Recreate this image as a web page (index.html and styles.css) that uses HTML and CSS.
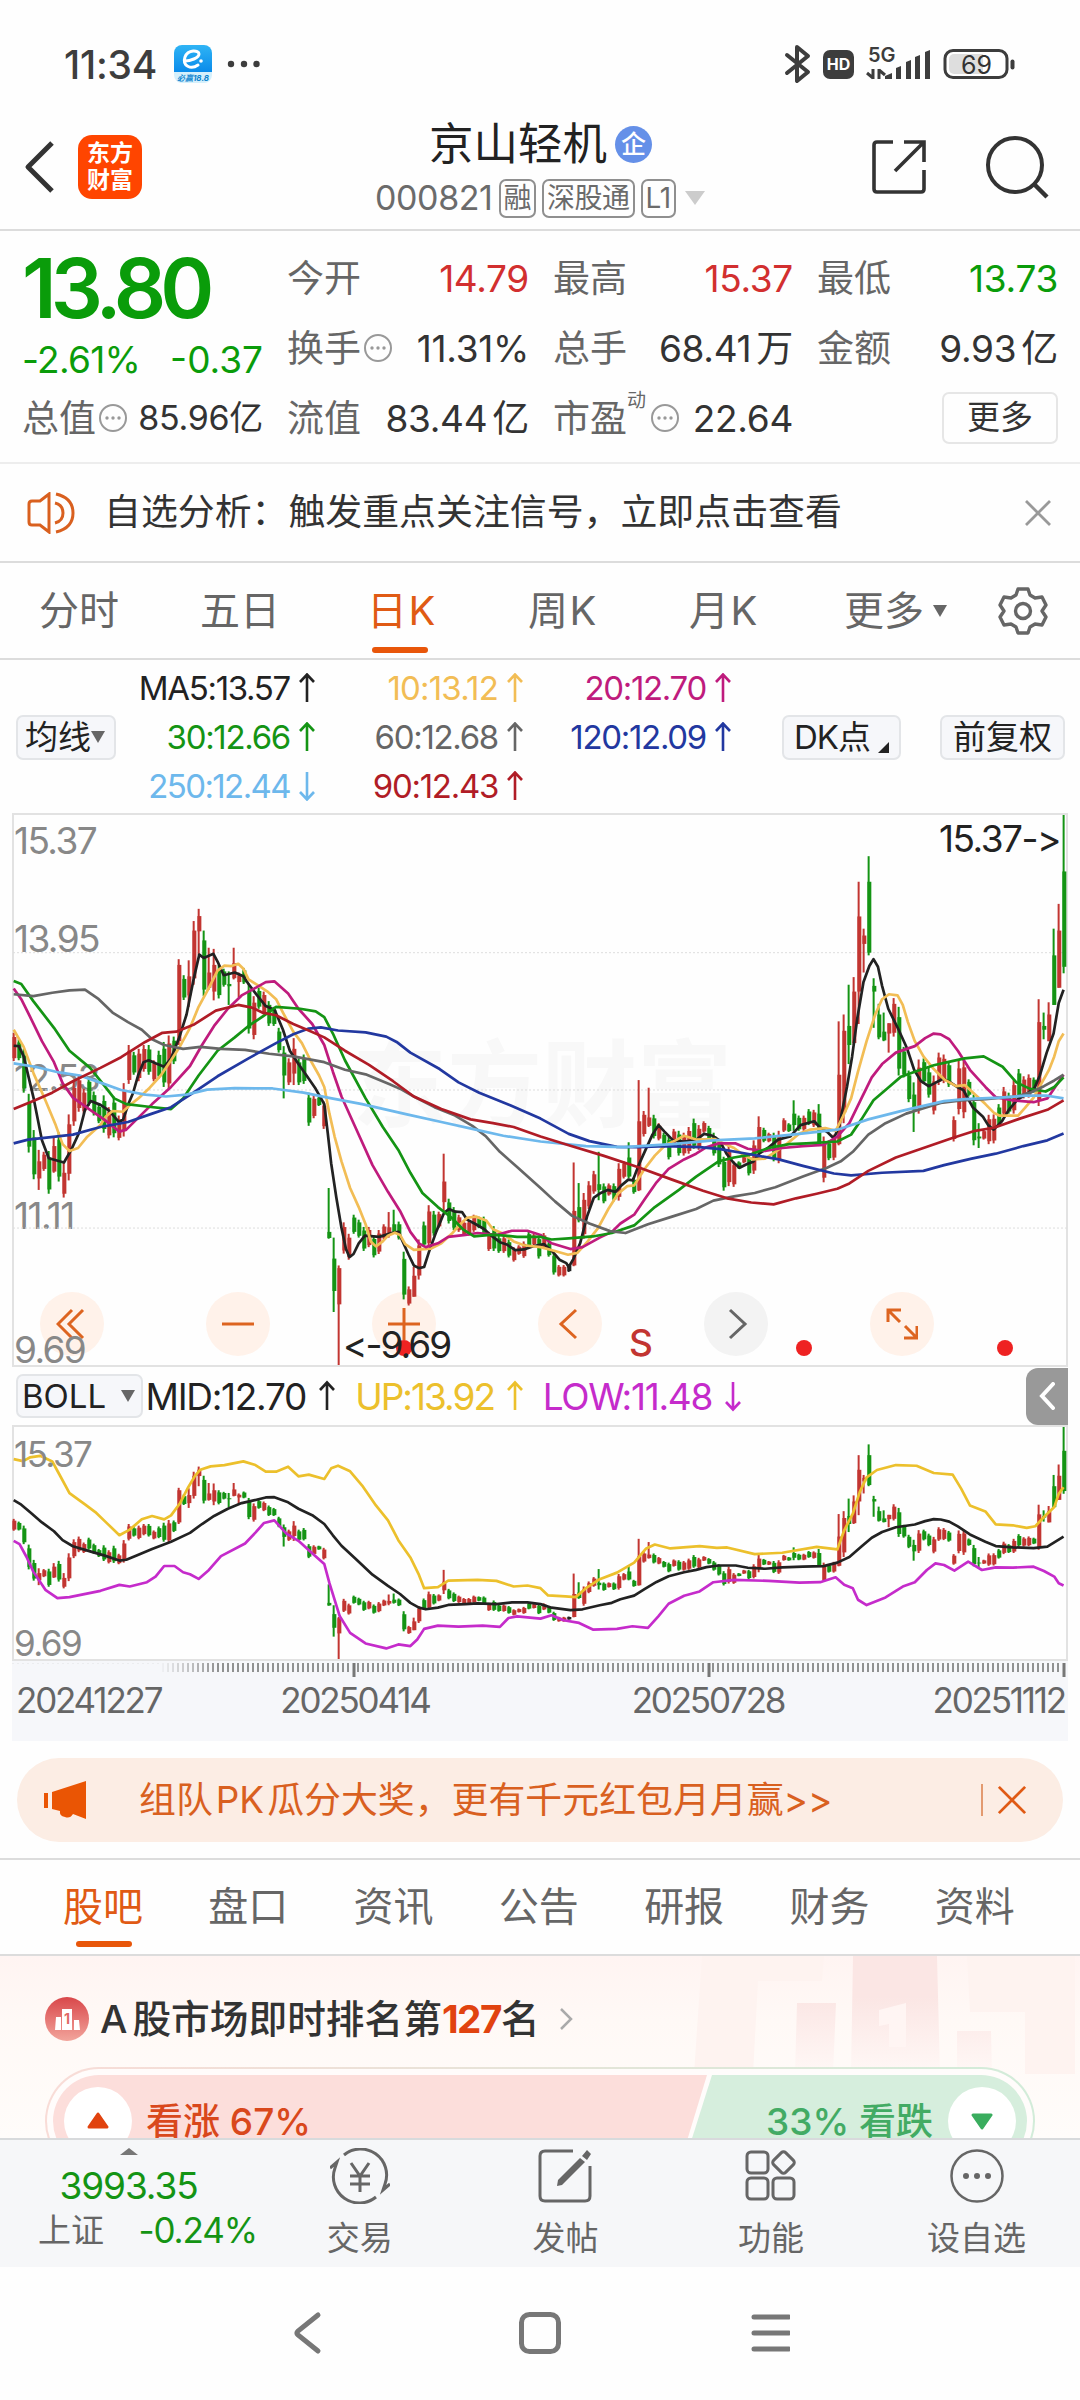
FILE: index.html
```html
<!DOCTYPE html>
<html lang="zh-CN">
<head>
  <meta charset="UTF-8" />
  <meta name="viewport" content="width=device-width, initial-scale=1.0" />
  <title>京山轻机 000821</title>
  <link rel="stylesheet" href="styles.css">
</head>
<body>
<svg class="defs" width="0" height="0">
  <symbol id="up" viewBox="0 0 18 30"><path d="M9 29V2M2 9l7-7.500 7 7.500" /></symbol>
  <symbol id="down" viewBox="0 0 18 30"><path d="M9 1v27M2 21l7 7.500 7-7.500" /></symbol>
  <symbol id="info" viewBox="0 0 30 30">
    <circle cx="15" cy="15" r="13" fill="none" stroke="#999" stroke-width="2" />
    <g fill="#999"><circle cx="9" cy="15" r="1.700" /><circle cx="15" cy="15" r="1.700" /><circle cx="21" cy="15" r="1.700" /></g>
  </symbol>
</svg>

<div class="status">
  <span class="clock">11:34</span>
  <svg class="app" width="38" height="38" viewBox="0 0 38 38">
    <defs>
      <linearGradient id="appBg" x1="0" y1="0" x2="0" y2="1"><stop offset="0" stop-color="#2fb4f5" /><stop offset="1" stop-color="#0a8bea" /></linearGradient>
      <clipPath id="appClip"><rect width="38" height="38" rx="8" /></clipPath>
    </defs>
    <g clip-path="url(#appClip)">
      <rect width="38" height="27" fill="url(#appBg)" />
      <rect y="27" width="38" height="11" fill="#d5f0fc" />
      <path d="M11 16c5 0 14-3 14-7s-11-5-14 3c-3 9 6 13 13 8" fill="none" stroke="#fff" stroke-width="3" stroke-linecap="round" />
      <circle cx="27" cy="16" r="1.800" fill="#fff" />
      <text x="19" y="35.500" text-anchor="middle" class="app-text">必赢18.8</text>
    </g>
  </svg>
  <svg class="dots" width="34" height="8"><g fill="#3d3d3d"><circle cx="4" cy="4" r="3.200" /><circle cx="17" cy="4" r="3.200" /><circle cx="29.500" cy="4" r="3.200" /></g></svg>
  <svg class="sys" width="234" height="42" viewBox="0 0 234 42">
    <path d="M4 12l21 17-11 9V4l11 9L4 30" fill="none" stroke="#3d3d3d" stroke-width="4" stroke-linecap="round" stroke-linejoin="round" />
    <rect x="40" y="7" width="31" height="29" rx="7" fill="#3d3d3d" />
    <text x="55.500" y="27" text-anchor="middle" class="hd">HD</text>
    <text x="85" y="18.500" class="fiveg">5G</text>
    <path d="M90 26v10M84 30l6 5M96 36V26M96 27l6 5" fill="none" stroke="#3d3d3d" stroke-width="3" />
    <path d="M102 36v-3l7-3v6zM113 36v-11l5-2v13zM123 36v-17l5-2v19zM132 36v-22l5-2v24zM142 36v-27l5-2v29z" fill="#3d3d3d" />
    <rect x="162" y="7.500" width="62" height="27" rx="8" fill="#fff" stroke="#3d3d3d" stroke-width="3" />
    <path d="M171 11h29v20h-29a5 5 0 0 1-5-5V16a5 5 0 0 1 5-5z" fill="#dedede" />
    <rect x="227.500" y="16.500" width="4" height="10" rx="2" fill="#3d3d3d" />
    <text x="193.500" y="30.500" text-anchor="middle" class="batt">69</text>
  </svg>
</div>

<header class="head">
  <svg class="back" width="32" height="54" viewBox="0 0 32 54"><path d="M28 3L4 27l24 24" fill="none" stroke="#333" stroke-width="5" stroke-linejoin="round" /></svg>
  <div class="logo">东方<br>财富</div>
  <div class="title">
    <div class="name">京山轻机<span class="qi">企</span></div>
    <div class="code">000821<i>融</i><i>深股通</i><i>L1</i><b></b></div>
  </div>
  <svg class="share" width="56" height="56" viewBox="0 0 56 56"><path d="M22 3H6q-3 0-3 3v44q0 3 3 3h44q3 0 3-3V31M33 3h20v20M53 3L24 32" fill="none" stroke="#333" stroke-width="3.600" /></svg>
  <svg class="search" width="64" height="64" viewBox="0 0 64 64"><circle cx="30" cy="30" r="27" fill="none" stroke="#333" stroke-width="4" /><path d="M49 49l13 13" stroke="#333" stroke-width="4.500" /></svg>
</header>

<section class="quote">
  <div class="price">
    <div class="big">13.80</div>
    <div class="chg"><span>-2.61%</span><span>-0.37</span></div>
    <div class="cell total"><label>总值</label><svg class="info"><use href="#info" /></svg><em>85.96亿</em></div>
  </div>
  <div class="cells">
    <div class="cell"><label>今开</label><em class="r">14.79</em></div>
    <div class="cell"><label>最高</label><em class="r">15.37</em></div>
    <div class="cell"><label>最低</label><em class="g">13.73</em></div>
    <div class="cell"><label>换手</label><svg class="info"><use href="#info" /></svg><em>11.31%</em></div>
    <div class="cell"><label>总手</label><em>68.41<u>万</u></em></div>
    <div class="cell"><label>金额</label><em>9.93<u>亿</u></em></div>
    <div class="cell"><label>流值</label><em>83.44<u>亿</u></em></div>
    <div class="cell"><label>市盈</label><sup>动</sup><svg class="info"><use href="#info" /></svg><em>22.64</em></div>
    <div class="cell"><span class="more">更多</span></div>
  </div>
</section>

<section class="notice">
  <svg width="48" height="42" viewBox="0 0 48 42"><g fill="none" stroke="#d9601f" stroke-width="3"><path d="M22 2v38l-9-7H5q-3 0-3-3V12q0-3 3-3h8zM29 2q17 4 17 19T29 40M28 11q8 2 8 10t-8 10" /></g></svg>
  <p>自选分析：触发重点关注信号，立即点击查看</p>
  <svg class="x" width="28" height="28" viewBox="0 0 28 28"><path d="M2 2l24 24M26 2L2 26" stroke="#999" stroke-width="2.800" /></svg>
</section>

<nav class="periods">
  <span>分时</span><span>五日</span><span class="on">日K</span><span>周K</span><span>月K</span><span>更多<b></b></span>
  <svg width="50" height="50" viewBox="0 0 50 50"><g fill="none" stroke="#666" stroke-width="3.400" stroke-linejoin="round"><path d="M20 3h10l2 6 5 3 7-1 4 8-4 6 4 6-4 8-7-1-5 3-2 6H20l-2-6-5-3-7 1-4-8 4-6-4-6 4-8 7 1 5-3z" /><circle cx="25" cy="25" r="7.500" /></g></svg>
</nav>

<section class="ma">
  <span class="btn">均线<b></b></span>
  <div class="ma-grid">
    <span class="k">MA5:13.57<svg><use href="#up" /></svg></span><span class="y">10:13.12<svg><use href="#up" /></svg></span><span class="m">20:12.70<svg><use href="#up" /></svg></span>
    <span class="gr">30:12.66<svg><use href="#up" /></svg></span><span class="gy">60:12.68<svg><use href="#up" /></svg></span><span class="b">120:12.09<svg><use href="#up" /></svg></span>
    <span class="lb">250:12.44<svg><use href="#down" /></svg></span><span class="dr">90:12.43<svg><use href="#up" /></svg></span>
  </div>
  <span class="btn dk">DK点<s></s></span>
  <span class="btn fq">前复权</span>
</section>

<section class="chart main-chart">
  <div class="mark">东方财富</div>
  <div class="tools">
    <i><svg viewBox="0 0 32 32"><path d="M16 2L2 16l14 14M27 2L13 16l14 14" /></svg></i>
    <i><svg viewBox="0 0 32 32"><path d="M0 16h32" /></svg></i>
    <i><svg viewBox="0 0 32 32"><path d="M0 16h32M16 0v32" /></svg></i>
    <i><svg viewBox="0 0 32 32"><path d="M22 2L7 16l15 14" /></svg></i>
    <i class="off"><svg viewBox="0 0 32 32"><path d="M10 2l15 14-15 14" /></svg></i>
    <i><svg viewBox="0 0 32 32"><path d="M2 14V2h13M2 2l12 12M31 18v12H18M31 30L19 18" /></svg></i>
  </div>
  <span class="lab l1">15.37</span><span class="lab l2">13.95</span><span class="lab l3">12.53</span><span class="lab l4">11.11</span><span class="lab l5">9.69</span>
  <svg id="kline" viewBox="36 37 3061 1442" preserveAspectRatio="none"></svg>
  <i class="ev e1"></i><i class="ev e2"></i><i class="ev e3"></i>
  <span class="hi">15.37-&gt;</span><span class="lo">&lt;-9.69</span><span class="sell">S</span>
</section>

<section class="boll">
  <span class="btn">BOLL<b></b></span>
  <span class="k">MID:12.70<svg><use href="#up" /></svg></span>
  <span class="up">UP:13.92<svg><use href="#up" /></svg></span>
  <span class="low">LOW:11.48<svg><use href="#down" /></svg></span>
  <span class="fold"><svg width="16" height="28" viewBox="0 0 16 28"><path d="M14 2L3 14l11 12" fill="none" stroke="#fff" stroke-width="4" stroke-linecap="round" /></svg></span>
</section>
<section class="chart sub-chart">
  <svg id="bands" viewBox="36 37 3061 1442" preserveAspectRatio="none"></svg>
  <span class="lab s1">15.37</span><span class="lab s2">9.69</span>
</section>
<div class="axis">
  <svg id="ticks" width="1054" height="18"></svg>
  <div class="dates"><span>20241227</span><span>20250414</span><span>20250728</span><span>20251112</span></div>
</div>

<div class="promo">
  <svg width="44" height="40" viewBox="0 0 44 40"><path d="M0 13h4v15H0zM8 12L42 1v38l-13-5q-3 5-8 3-6-1-5-6l-8-2z" fill="#ea5504" /></svg>
  <p>组队<span>PK</span>瓜分大奖，更有千元红包月月赢&gt;&gt;</p>
  <svg class="x" width="32" height="32" viewBox="0 0 32 32"><path d="M2 2l28 28M30 2L2 30" stroke="#e05a14" stroke-width="3" /></svg>
</div>

<nav class="tabs">
  <span class="on">股吧</span><span>盘口</span><span>资讯</span><span>公告</span><span>研报</span><span>财务</span><span>资料</span>
</nav>

<section class="rank">
  <svg class="podium" width="400" height="118" viewBox="0 0 400 118">
    <defs><linearGradient id="fade" x1="0" y1="0" x2="0" y2="118" gradientUnits="userSpaceOnUse"><stop offset="0.350" stop-color="#fbe6e4" /><stop offset="1" stop-color="#fff8f6" /></linearGradient></defs>
    <path d="M22 0h122l-2 25H78l-5 93H14zM287 0h108v118h-50V56h-55z" fill="#fef3f0" />
    <path d="M117 47h39l-3 71h-38zM173 0h84l3 118h-89zM277 75h34l1 43h-35z" fill="url(#fade)" />
    <path d="M199 54l27-7v44h-17V68l-10 2z" fill="#fff5f3" />
  </svg>
  <div class="rank-title">
    <svg width="44" height="44" viewBox="0 0 44 44">
      <defs><linearGradient id="rk" x1="0" y1="0" x2="0" y2="1"><stop offset="0" stop-color="#d9474a" /><stop offset="1" stop-color="#f2a59c" /></linearGradient></defs>
      <circle cx="22" cy="22" r="22" fill="url(#rk)" />
      <path d="M11 20h5v13h-6zM17 12h10v21H17zM29 23h5l1 10h-6z" fill="#fff" />
      <text x="22" y="27" text-anchor="middle" class="one">1</text>
    </svg>
    <p><span>A</span>股市场即时排名第<strong>127</strong>名</p>
    <svg width="14" height="22" viewBox="0 0 14 22"><path d="M2 1l10 10L2 21" fill="none" stroke="#aaa" stroke-width="2.500" /></svg>
  </div>
  <div class="vote">
    <div class="vote-in">
      <div class="bull"><i><svg width="24" height="18" viewBox="0 0 24 18"><path d="M12 2l9 13H3z" fill="#e1430f" stroke="#e1430f" stroke-width="3" stroke-linejoin="round" /></svg></i>看涨 67%</div>
      <div class="bear">33% 看跌<i><svg width="24" height="18" viewBox="0 0 24 18"><path d="M12 16l9-13H3z" fill="#3aad5e" stroke="#3aad5e" stroke-width="3" stroke-linejoin="round" /></svg></i></div>
    </div>
  </div>
</section>

<footer class="bar">
  <div class="index">
    <b></b>
    <div class="num">3993.35</div>
    <div class="sub"><span>上证</span><em>-0.24%</em></div>
  </div>
  <div class="item">
    <svg viewBox="0 0 60 56"><g fill="none" stroke="#666" stroke-width="3"><path d="M14 7A26 26 0 0 1 55 36l-2 6 7-6M46 49A26 26 0 0 1 5 20l2-6-7 6" /><path d="M21 15l9 13 9-13M30 28v16M20 28h20M20 36h20" /></g></svg>
    <span>交易</span>
  </div>
  <div class="item">
    <svg viewBox="0 0 60 56"><path d="M38 3H10q-5 0-5 5v40q0 5 5 5h40q5 0 5-5V18" fill="none" stroke="#666" stroke-width="3" /><path d="M47 8l5-6 4 4-4 6zM45 10l5 4-23 23-5 1 1-6z" fill="#666" /></svg>
    <span>发帖</span>
  </div>
  <div class="item">
    <svg viewBox="0 0 60 56"><g fill="none" stroke="#666" stroke-width="3"><rect x="6" y="4" width="21" height="21" rx="4" /><rect x="6" y="30" width="21" height="21" rx="4" /><rect x="32" y="30" width="21" height="21" rx="4" /><rect x="34" y="6" width="17" height="17" rx="3" transform="rotate(45 42.500 14.500)" /></g></svg>
    <span>功能</span>
  </div>
  <div class="item">
    <svg viewBox="0 0 60 56"><circle cx="30" cy="28" r="25.500" fill="none" stroke="#666" stroke-width="2.500" /><g fill="#666"><circle cx="19" cy="28" r="3" /><circle cx="30" cy="28" r="3" /><circle cx="41" cy="28" r="3" /></g></svg>
    <span>设自选</span>
  </div>
</footer>

<div class="sysnav">
  <svg width="500" height="44" viewBox="0 0 500 44"><g fill="none" stroke="#777" stroke-width="5" stroke-linecap="round"><path d="M28 4L8 20q-2 2 0 4l20 16" /><rect x="231.500" y="3.500" width="37" height="37" rx="8" /><path d="M464 6h35M464 22h35M464 38h35" /></g></svg>
</div>
<script src="chart.js"></script>
</body>
</html>
```
FILE: styles.css
```css
* {
  box-sizing: border-box;
}
body {
  margin: 0;
  width: 1080px;
  height: 2400px;
  overflow: hidden;
  background: #fefefe;
  color: #333;
  font-family: Inter, "Noto Sans CJK SC", sans-serif;
  font-size: 37px;
  line-height: 1;
}
i, em {
  font-style: normal;
}
p {
  margin: 0;
}
svg {
  display: block;
  flex-shrink: 0;
}
.defs {
  position: absolute;
}

/* status bar */
.status {
  height: 110px;
  padding: 18px 63px 0 64px;
  display: flex;
  align-items: center;
  color: #3d3d3d;
}
.clock {
  width: 110px;
  font-size: 39px;
  font-weight: 500;
  letter-spacing: -0.2px;
}
.dots {
  margin-left: 15px;
}
.sys {
  margin-left: auto;
}
.app-text {
  font-size: 8px;
  font-weight: 700;
  font-style: italic;
  fill: #0d84cf;
}
.hd {
  font-size: 16px;
  font-weight: 700;
  fill: #fff;
}
.fiveg {
  font-size: 20px;
  font-weight: 600;
  fill: #3d3d3d;
}
.batt {
  font-size: 25px;
  fill: #333;
}

/* header */
.head {
  height: 121px;
  border-bottom: 2px solid #dcdcdc;
  display: flex;
  align-items: center;
  padding: 0 31px 5px 24px;
}
.logo {
  width: 64px;
  height: 64px;
  margin-left: 22px;
  padding-top: 5px;
  border-radius: 14px;
  background: #ff4500;
  color: #fff;
  font-size: 23px;
  font-weight: 700;
  line-height: 27px;
  text-align: center;
}
.title {
  width: 340px;
  margin: 8px 0 0 230px;
}
.name {
  display: flex;
  align-items: center;
  margin-left: 57px;
  height: 54px;
  font-size: 44.5px;
  color: #222;
}
.qi {
  width: 37px;
  height: 37px;
  margin-left: 8px;
  border-radius: 50%;
  background: #6590e8;
  color: #fff;
  font-size: 25px;
  font-weight: 500;
  line-height: 36px;
  text-align: center;
}
.code {
  display: flex;
  align-items: center;
  height: 54px;
  font-size: 34px;
  letter-spacing: -0.4px;
  color: #6b6b6b;
  margin-left: 3px;
}
.code i {
  height: 39px;
  margin-left: 6px;
  padding: 0 3px;
  border: 2px solid #8f8f8f;
  border-radius: 7px;
  font-size: 28px;
  line-height: 35px;
  letter-spacing: -0.5px;
}
.code b {
  margin-left: 9px;
  border: 10px solid transparent;
  border-top: 14px solid #ccc;
  border-bottom: 0;
}
.share {
  margin-left: 159px;
}
.search {
  margin-left: auto;
}

/* quote */
.quote {
  height: 233px;
  padding: 12px 22px 0;
  border-bottom: 2px solid #ededed;
  display: flex;
}
.price {
  width: 265px;
  color: #0a9c0a;
}
.big {
  height: 92px;
  font-size: 82px;
  font-weight: 600;
  line-height: 91px;
  letter-spacing: -5.8px;
}
.chg {
  display: flex;
  justify-content: space-between;
  align-items: center;
  width: 241px;
  height: 48px;
  font-size: 37px;
  letter-spacing: -0.7px;
}
.chg span:last-child {
  letter-spacing: 0;
}
.total {
  width: 241px;
}
.total em {
  font-size: 34px;
  letter-spacing: -1.1px;
}
.cells {
  display: grid;
  grid-template-columns: 242px 240px 241px;
  column-gap: 24px;
  grid-auto-rows: 70px;
}
.cell {
  display: flex;
  align-items: center;
  height: 70px;
  color: #333;
}
.cell label {
  color: #666;
}
.cell em {
  margin-left: auto;
  letter-spacing: -0.3px;
  white-space: nowrap;
}
.cell .r {
  color: #d22f2f;
}
.cell .g {
  color: #0a9c0a;
}
.cell u {
  text-decoration: none;
  margin-left: 5px;
}
.cell sup {
  width: 20px;
  height: 54px;
  font-size: 19px;
  color: #666;
}
.info {
  width: 30px;
  height: 30px;
  margin-left: 2px;
}
.cell sup + .info {
  margin-left: 3px;
}
.more {
  width: 116px;
  height: 52px;
  margin-left: auto;
  border: 2px solid #e6e6e6;
  border-radius: 7px;
  font-size: 33px;
  line-height: 46px;
  text-align: center;
}

/* notice */
.notice {
  height: 99px;
  padding: 0 28px 0 27px;
  border-bottom: 2px solid #dcdcdc;
  display: flex;
  align-items: center;
}
.notice p {
  margin-left: 29px;
  font-size: 36.9px;
}
.x {
  margin-left: auto;
}

/* period tabs */
.periods {
  height: 97px;
  padding-left: 39px;
  border-bottom: 2px solid #dcdcdc;
  display: flex;
  align-items: center;
  font-size: 40px;
  color: #666;
}
.periods span {
  position: relative;
  width: 161px;
  white-space: nowrap;
}
.periods span:nth-child(3) {
  margin-left: 6px;
}
.periods span:nth-child(-n+5):nth-child(n+3) {
  letter-spacing: 1.5px;
}
.periods span:nth-child(5) {
  width: 155px;
}
.periods span:nth-child(6) {
  width: 154px;
  display: flex;
  align-items: center;
  gap: 9px;
}
.periods b, .btn b {
  border: 7px solid transparent;
  border-top: 12px solid #666;
  border-bottom: 0;
}
.periods .on, .tabs .on {
  color: #e05a14;
}
.on::after {
  content: "";
  position: absolute;
  left: 5px;
  bottom: -22px;
  width: 56px;
  height: 6px;
  border-radius: 3px;
  background: #e8560a;
}

/* moving averages */
.ma {
  height: 154px;
  padding-left: 16px;
  display: flex;
  align-items: center;
}
.btn {
  height: 45px;
  padding: 0 7px;
  border: 2px solid #e3e5e8;
  border-radius: 7px;
  background: #f6f7fa;
  display: flex;
  align-items: center;
  color: #222;
  font-size: 33px;
  white-space: nowrap;
}
.ma > .btn:first-child {
  width: 100px;
}
.btn s {
  margin: 20px 0 0 8px;
  border-left: 11px solid transparent;
  border-bottom: 11px solid #222;
}
.ma-grid {
  width: 616px;
  display: grid;
  grid-template-columns: 200px 208px 208px;
  grid-auto-rows: 49px;
}
.ma-grid span, .boll > span:not(.btn) {
  display: flex;
  align-items: center;
  justify-content: flex-end;
  font-size: 33px;
  letter-spacing: -1.3px;
}
.ma-grid .y {
  letter-spacing: -0.8px;
}
.ma-grid .lb {
  letter-spacing: -1.6px;
}
.ma-grid svg, .boll span svg {
  width: 18px;
  height: 30px;
  margin-left: 8px;
  fill: none;
  stroke: currentColor;
  stroke-width: 2.6;
}
.dk {
  margin-left: 50px;
  width: 119px;
  padding: 0 4px 0 10px;
  letter-spacing: -1px;
}
.fq {
  margin-left: 39px;
  width: 125px;
  padding-left: 11px;
}
.k { color: #222; }
.y { color: #f2bd55; }
.m { color: #bf1b7d; }
.gr { color: #149414; }
.gy { color: #666; }
.b { color: #2238a0; }
.lb { color: #6db8ec; }
.dr { color: #b01c26; }

/* charts */
.chart {
  position: relative;
  margin: 0 12px 0 12px;
  width: 1056px;
  border: 2px solid #e2e2e2;
}
.main-chart {
  height: 554px;
  margin-top: -1px;
}
.sub-chart {
  height: 236px;
}
#kline, #bands {
  position: absolute;
  left: -1px;
  top: 0;
  width: 1054px;
  height: 100%;
  overflow: visible;
}
#kline path, #bands path {
  fill: none;
  vector-effect: non-scaling-stroke;
  stroke-linejoin: round;
}
.lab {
  position: absolute;
  left: 0;
  font-size: 37px;
  letter-spacing: -1.6px;
  color: #888;
}
.l1 { top: 7px; }
.l2 { top: 105px; }
.l3 { top: 244px; }
.l4 { top: 382px; }
.l5 { top: 516px; }
.s1 { top: 10px; font-size: 35px; }
.s2 { top: 199px; font-size: 35px; }
.hi, .lo {
  position: absolute;
  font-size: 37px;
  letter-spacing: -1.5px;
  color: #222;
  white-space: nowrap;
}
.hi {
  right: 6px;
  top: 5px;
}
.lo {
  left: 329px;
  top: 511px;
  letter-spacing: -2px;
}
.sell {
  position: absolute;
  left: 615px;
  top: 509px;
  font-size: 37px;
  font-weight: 500;
  color: #c23531;
}
.ev {
  position: absolute;
  top: 525px;
  width: 16px;
  height: 16px;
  border-radius: 50%;
  background: #ee2222;
}
.e1 { left: 382px; }
.e2 { left: 782px; }
.e3 { left: 983px; }
.mark {
  position: absolute;
  left: 338px;
  top: 223px;
  font-size: 95px;
  font-weight: 700;
  color: #f8f8f8;
}
.tools {
  position: absolute;
  left: 26px;
  bottom: 9px;
  width: 894px;
  display: flex;
  justify-content: space-between;
}
.tools i {
  width: 64px;
  height: 64px;
  border-radius: 50%;
  background: #fff2ea;
  display: flex;
  align-items: center;
  justify-content: center;
}
.tools svg {
  width: 32px;
  height: 32px;
  fill: none;
  stroke: #dd6420;
  stroke-width: 3;
}
.tools .off {
  background: #f3f3f3;
}
.tools .off svg {
  stroke: #666;
}

.boll {
  height: 58px;
  padding: 0 12px 0 16px;
  display: flex;
  align-items: center;
}
.boll .btn {
  width: 127px;
  height: 44px;
  padding: 0 6px 0 4px;
  justify-content: space-between;
}
.boll > span:not(.btn) {
  font-size: 37px;
  letter-spacing: -1.3px;
}
.boll span svg {
  margin-left: 12px;
  height: 34px;
}
.boll > .k { width: 193px; }
.boll > span.up { width: 188px; color: #ecc02c; letter-spacing: -2px; }
.boll > .low { width: 218px; color: #c52bcb; }
.boll > span.fold {
  width: 42px;
  height: 57px;
  margin-left: auto;
  border-radius: 12px 0 0 12px;
  background: #999;
  justify-content: center;
}
.boll .fold svg {
  width: 16px;
  height: 28px;
  margin: 0;
}

.axis {
  height: 80px;
  width: 1056px;
  margin-left: 12px;
  background: #f6f7fa;
}
.dates {
  display: grid;
  grid-template-columns: 165px 348px 358px 178px;
  padding-left: 4px;
  padding-top: 2px;
  color: #666;
  font-size: 35px;
  letter-spacing: -2.2px;
  line-height: 38px;
}
.dates span:nth-child(2), .dates span:nth-child(3) {
  text-align: center;
}
.dates span:last-child {
  text-align: right;
}

/* promo banner */
.promo {
  height: 84px;
  margin: 17px 17px 16px;
  padding: 0 36px 0 27px;
  border-radius: 42px;
  background: #fcede4;
  display: flex;
  align-items: center;
  color: #d9601f;
}
.promo p {
  flex: 1;
  margin-left: 51px;
  font-size: 36.9px;
}
.promo p span {
  margin: 0 3px;
}
.promo .x {
  width: 46px;
  padding-left: 14px;
  border-left: 2px solid #e39a70;
}

/* content tabs */
.tabs {
  height: 98px;
  border-top: 2px solid #dcdcdc;
  border-bottom: 2px solid #dcdcdc;
  padding-left: 63px;
  display: flex;
  align-items: center;
  font-size: 40px;
  color: #666;
}
.tabs span {
  position: relative;
  width: 145.7px;
}
.tabs .on::after {
  left: 13px;
  bottom: -20px;
}

/* ranking */
.rank {
  position: relative;
  height: 182px;
  overflow: hidden;
  background: linear-gradient(#fff4f2, #fff9f6 35%, #fffcfa);
}
.podium {
  position: absolute;
  left: 680px;
  top: 0;
}
.rank-title {
  position: relative;
  height: 111px;
  padding: 15px 0 0 45px;
  display: flex;
  align-items: center;
}
.rank-title p {
  margin: 0 19px 0 11px;
  font-size: 38.7px;
  font-weight: 500;
}
.rank-title p span {
  margin-right: 5px;
}
.rank-title strong {
  color: #e1430f;
  letter-spacing: -1.5px;
}
.one {
  font-size: 14px;
  font-weight: 700;
  fill: #e06a66;
}
.vote {
  position: relative;
  margin: 0 45px;
  height: 108px;
  padding: 6px;
  border-radius: 54px;
  border: 2px solid transparent;
  background: linear-gradient(#fffcfb, #fffcfb) padding-box, linear-gradient(90deg, #f9dcd7, #d2ecd9) border-box;
}
.vote-in {
  height: 92px;
  border-radius: 46px;
  overflow: hidden;
  display: flex;
  font-size: 37px;
  font-weight: 500;
}
.vote-in div {
  display: flex;
  align-items: center;
}
.bull {
  width: 654px;
  margin-right: -24px;
  padding-left: 11px;
  background: #fcdedb;
  color: #d9481c;
  clip-path: polygon(0 0, 100% 0, 626px 100%, 0 100%);
}
.bear {
  flex: 1;
  justify-content: flex-end;
  padding-right: 11px;
  background: #d6eedd;
  color: #43ab64;
  clip-path: polygon(29px 0, 100% 0, 100% 100%, 0 100%);
}
.vote i {
  width: 68px;
  height: 68px;
  border-radius: 50%;
  background: #fff;
  display: flex;
  align-items: center;
  justify-content: center;
}
.bull i {
  margin-right: 14px;
}
.bear i {
  margin-left: 15px;
}

/* bottom bar */
.bar {
  height: 129px;
  border-top: 2px solid #d8dadc;
  background: #f6f7f9;
  display: flex;
}
.index {
  width: 257px;
  color: #149414;
}
.index b {
  display: block;
  width: 0;
  margin: 8px 0 0 120px;
  border: 9px solid transparent;
  border-bottom: 7px solid #777;
  border-top: 0;
}
.num {
  margin-top: 12px;
  text-align: center;
  font-size: 37px;
  letter-spacing: -1.1px;
}
.sub {
  display: flex;
  justify-content: space-between;
  align-items: center;
  height: 34px;
  margin-top: 9px;
  padding-left: 38px;
  font-size: 33px;
}
.sub span {
  color: #666;
}
.sub em {
  font-size: 35px;
  letter-spacing: -1.1px;
}
.item {
  width: 205.6px;
  padding-top: 8px;
  display: flex;
  flex-direction: column;
  align-items: center;
  font-size: 33px;
  color: #666;
}
.item svg {
  width: 60px;
  height: 56px;
  margin-bottom: 18px;
}
.sysnav {
  height: 132px;
  padding: 44px 0 0 290px;
}
```
FILE: chart.js
```js
// candles: high, low, r|g|k and, where the body is shorter than the wick, its top and bottom
const candles = `
608 682 r,625 680 g,650 765 g,768 922 g,863 992 g,915 1020 r 945 990,920 970 r,918 1030 g,883 975 r 905 972,869 998 g,
945 1040 r 975 1030,822 995 r,735 852 r,718 815 r,755 820 r,725 800 g,762 825 g,795 845 g,772 870 g,803 885 r,
775 882 g,825 890 r,740 880 r,640 742 r,658 718 g,650 735 r,640 710 r,640 718 g,680 735 r,655 728 g,
632 750 g,615 755 r,618 690 g,415 640 r 430 630,457 522 g,418 540 r 460 510,315 482 r,283 405 r 302 342,340 512 g,385 495 r 450 490,
388 523 r 430 500,430 518 g,440 487 g,447 535 g 480 486,385 468 r 425 465,450 515 r 458 475,438 480 g,478 610 g,512 625 r,490 545 g,
500 560 r,525 590 g,540 590 g,595 660 g,643 780 g 660 720,675 745 r,622 745 r 650 715,675 745 g,665 742 g,765 852 g,
772 832 r,775 800 g,788 860 r,1015 1148 g 1130 1146,1145 1340 g 1200 1285,1218 1479 r 1225 1320,1105 1187 r,1135 1203 r,1085 1135 g,1098 1145 g,
1117 1180 g,1117 1170 r,1140 1197 g,1125 1188 r,1110 1150 r,1078 1145 r 1118 1135,1072 1135 g 1110 1130,1103 1150 g,1182 1307 g,1273 1323 r,
1222 1300 r 1245 1300,1150 1255 r,1103 1170 g,1060 1170 r,1075 1140 g,1077 1120 r,925 1075 r 998 1052,1043 1108 g,1065 1125 g,1085 1130 r,
1100 1140 r,1100 1140 r,1085 1130 r,1090 1120 g,1090 1140 g,1130 1180 r,1115 1180 g,1140 1185 g,1140 1185 r,1150 1197 g,
1170 1208 r,1165 1190 r,1155 1198 r,1130 1170 g,1135 1165 r,1140 1200 g,1133 1175 r,1155 1195 g,1185 1242 g,1217 1247 r,
1217 1247 r,1215 1235 k,948 1220 r 1075 1218,1002 1105 g 1065 1100,1028 1148 r,997 1070 r,970 1030 r,920 1047 g 1005 1020,1003 1055 g,1003 1035 r,
1003 1050 g,950 1048 r,945 990 r,895 990 g 935 985,987 1030 g,732 1023 r 840 1021,813 880 r,752 855 r 830 852,823 885 g,845 890 r,
870 910 g,880 940 g,860 905 r,865 930 g,870 930 r,855 925 r,833 912 g,850 915 r,840 870 r,852 890 g,
870 930 g,890 960 g,933 1022 g,905 1010 r,945 1012 r,945 965 g,925 950 r,925 982 g,890 978 r,827 940 r 855 915,
857 895 g,870 895 r,870 945 g,865 950 r,832 868 r,845 868 g,785 865 g 820 850,825 865 g,825 865 r,808 850 g,
810 855 r,795 905 g 820 900,880 1000 r,890 942 g,875 942 r,578 903 r 718 900,560 845 r,482 690 g 590 640,462 640 r 500 635,212 585 r 303 500,
335 450 r 353 375,145 405 g 212 398,465 595 g 485 500,532 625 g 560 620,555 630 g 605 628,583 660 r 583 610,517 618 r,540 720 g,645 725 g,707 790 g,
738 868 g 770 810,678 820 r,675 742 g,700 778 g,720 822 r,660 745 r,665 740 r,683 750 g,827 893 r,680 822 r,
675 832 r,730 775 g,770 903 g,845 910 g 880 885,862 888 r,823 900 r,822 898 r,795 855 g,750 827 r,765 820 g,
732 820 r,703 780 g,722 780 r,717 778 r,725 765 g,520 800 r 580 785,555 625 g 590 600,528 630 r 560 630,335 535 g 405 535,270 490 r 340 490,
37 452 g 185 435`.split(',').map(s => s.trim().split(' '));

const lines = {
  ma5: ['#222', '38,642 53,643 67,670 96,780 120,890 140,937 184,948 205,915 228,870 245,810 262,787 290,797 315,812 330,828 344,842 356,835 372,793 385,765 400,718 415,685 430,680 450,688 475,697 495,675 519,620 540,560 560,470 577,403 590,412 618,401 632,425 648,457 680,450 705,460 720,480 745,510 770,538 796,548 820,600 840,655 865,690 890,722 915,755 940,795 950,870 960,950 975,1040 990,1120 1003,1175 1013,1196 1025,1188 1040,1160 1058,1140 1100,1143 1135,1133 1156,1130 1165,1150 1185,1190 1200,1218 1215,1225 1230,1222 1245,1180 1265,1130 1288,1080 1302,1070 1320,1077 1340,1078 1355,1098 1380,1110 1405,1123 1425,1140 1450,1157 1470,1163 1495,1178 1520,1176 1545,1168 1578,1162 1603,1182 1623,1203 1643,1212 1650,1222 1664,1200 1683,1160 1703,1090 1723,1040 1743,1028 1763,1020 1786,1025 1803,1008 1823,993 1836,995 1853,955 1873,915 1893,875 1911,850 1928,867 1953,890 1983,893 2018,890 2043,873 2068,878 2088,890 2108,925 2128,948 2146,962 2168,952 2186,946 2203,925 2228,910 2258,888 2293,880 2323,850 2363,840 2378,855 2403,870 2420,885 2436,850 2458,750 2473,670 2488,570 2506,475 2523,433 2535,415 2548,435 2560,485 2578,545 2608,600 2633,650 2653,705 2673,735 2695,748 2713,740 2738,728 2758,738 2778,750 2796,758 2823,803 2853,828 2868,850 2884,862 2908,840 2928,810 2953,783 2978,770 3003,752 3018,720 3038,660 3058,610 3073,530 3087,495'],
  ma10: ['#f2bd55', '38,600 67,645 96,715 130,785 160,850 180,900 200,918 225,910 250,882 290,850 305,828 325,813 355,815 375,798 400,780 430,755 465,720 495,680 520,645 550,595 575,540 605,490 630,445 650,432 670,433 690,427 705,440 720,468 750,485 775,500 800,520 820,555 850,605 875,635 900,680 925,720 940,750 955,820 970,880 990,945 1015,1015 1040,1065 1060,1110 1075,1155 1090,1168 1110,1155 1125,1140 1145,1132 1160,1138 1175,1162 1200,1177 1250,1174 1280,1160 1310,1135 1335,1110 1355,1093 1380,1090 1410,1100 1430,1123 1460,1135 1490,1155 1520,1165 1568,1170 1610,1180 1648,1190 1675,1185 1705,1155 1735,1120 1765,1070 1793,1030 1820,1010 1840,1008 1870,965 1900,930 1930,903 1960,890 1985,878 2020,888 2075,887 2100,898 2130,910 2160,930 2185,940 2220,938 2250,920 2285,898 2320,872 2350,862 2395,858 2425,865 2445,830 2470,780 2490,710 2515,630 2540,560 2560,520 2580,507 2605,510 2620,535 2635,580 2655,630 2680,670 2710,703 2740,730 2775,748 2800,745 2830,770 2860,795 2885,818 2900,825 2955,825 2975,805 3000,778 3020,745 3045,705 3060,670 3073,630 3087,610'],
  ma20: ['#bf1b7d', '38,492 60,520 85,565 120,630 155,685 180,740 210,778 260,810 300,835 345,867 365,862 395,835 440,795 495,750 550,695 585,640 620,590 660,545 700,510 735,493 770,475 795,473 835,505 865,545 905,585 940,640 965,710 990,775 1030,855 1080,955 1125,1025 1160,1075 1190,1130 1215,1160 1235,1170 1270,1160 1300,1143 1350,1138 1385,1133 1440,1138 1485,1127 1530,1127 1568,1138 1600,1160 1655,1175 1690,1170 1740,1145 1775,1130 1800,1108 1840,1085 1870,1045 1905,1000 1940,965 1985,940 2020,925 2050,908 2085,898 2135,898 2170,912 2220,918 2270,910 2330,905 2390,902 2430,880 2465,845 2500,780 2530,725 2560,690 2600,660 2655,643 2685,622 2710,610 2730,612 2755,625 2780,655 2815,705 2860,750 2890,777 2940,785 3000,790 3040,780 3087,718'],
  ma30: ['#149414', '38,472 60,480 95,525 155,595 200,655 260,700 300,745 330,780 365,795 430,802 495,808 530,780 575,720 630,655 680,620 720,590 770,560 800,540 870,545 915,552 940,567 965,610 1000,680 1060,780 1110,855 1155,915 1190,975 1225,1028 1270,1065 1310,1093 1345,1125 1375,1142 1430,1137 1500,1143 1568,1143 1600,1150 1650,1147 1720,1142 1775,1133 1840,1113 1900,1065 1970,1020 2020,985 2085,945 2130,935 2175,928 2230,910 2290,900 2340,898 2430,893 2470,875 2500,835 2535,785 2580,750 2615,723 2655,710 2710,693 2760,683 2800,675 2855,670 2910,697 2950,738 2990,755 3035,762 3060,750 3087,725'],
  ma60: ['#666', '38,507 95,512 150,503 200,497 245,495 285,520 325,555 370,580 410,600 440,625 475,640 530,650 580,645 640,650 710,653 780,663 850,670 940,685 1000,705 1060,717 1130,743 1165,757 1200,775 1260,803 1320,825 1370,852 1410,880 1450,920 1500,960 1568,1015 1610,1050 1660,1088 1710,1108 1770,1128 1815,1133 1880,1110 1950,1090 2020,1070 2070,1048 2130,1037 2190,1028 2250,1013 2330,985 2400,962 2440,945 2475,920 2520,875 2570,845 2630,820 2690,803 2730,792 2790,785 2860,782 2950,775 2990,765 3030,748 3060,733 3087,718'],
  ma120: ['#2238a0', '38,898 80,888 140,882 210,875 290,855 370,842 440,820 495,803 560,765 630,722 720,675 800,635 850,612 895,597 930,594 980,602 1060,607 1120,618 1150,632 1190,660 1275,703 1330,738 1390,765 1480,798 1568,833 1650,873 1710,892 1790,907 1850,908 1930,905 2030,908 2090,913 2180,927 2260,940 2330,957 2420,977 2470,982 2560,975 2680,970 2740,955 2820,938 2890,925 2970,905 3040,890 3087,872'],
  ma250: ['#6db8ec', '38,688 100,697 170,712 230,720 300,742 350,758 420,770 480,775 540,770 600,757 680,753 790,754 880,765 950,778 1050,795 1180,822 1280,842 1370,860 1460,878 1568,893 1700,905 1810,908 1950,900 2070,890 2190,885 2320,873 2430,862 2520,835 2620,812 2740,787 2800,782 2900,778 2980,773 3040,773 3087,780'],
  ma90: ['#b01c26', '38,808 100,785 150,765 210,735 290,700 350,672 420,632 470,608 510,605 560,587 625,550 690,535 730,542 760,555 800,562 850,585 895,602 940,620 1000,655 1070,692 1140,735 1200,775 1280,808 1365,835 1430,845 1490,855 1568,880 1650,903 1750,930 1850,960 1950,993 2040,1022 2110,1042 2180,1053 2245,1058 2310,1042 2370,1030 2430,1017 2465,1003 2520,970 2600,935 2680,910 2760,885 2830,865 2885,857 2960,833 3040,810 3087,785']
};

// boll bands, on the sub chart's own scale (168 top, 869 bottom)
const up = '38,265 65,271 85,260 115,255 150,272 170,310 200,368 245,402 275,425 310,460 345,495 375,478 410,447 440,437 475,447 495,435 520,400 545,350 565,315 580,297 610,287 650,283 705,272 740,283 770,303 800,303 835,288 865,317 895,312 940,325 960,293 980,285 1015,302 1050,345 1090,405 1125,450 1155,510 1190,562 1215,615 1230,655 1270,652 1300,632 1385,630 1440,633 1490,650 1530,647 1568,655 1590,677 1640,680 1670,682 1700,655 1740,628 1790,608 1840,578 1875,535 1900,523 1945,535 2030,528 2080,533 2110,532 2190,552 2270,548 2370,530 2430,538 2450,480 2475,430 2495,365 2515,320 2545,298 2600,283 2660,285 2710,307 2765,312 2790,355 2815,405 2860,423 2890,462 2940,465 2980,473 3005,468 3030,440 3060,410 3073,370 3087,350';
const low = '38,512 55,522 75,560 95,605 130,660 165,685 200,682 290,663 345,645 375,650 425,637 450,620 475,588 505,588 530,607 550,613 575,627 605,600 640,558 710,520 740,487 765,458 795,450 830,490 865,512 900,545 940,582 955,640 985,740 1015,790 1060,822 1120,837 1155,825 1190,830 1210,810 1230,778 1270,768 1330,771 1400,768 1450,772 1475,745 1500,740 1568,747 1600,737 1635,752 1680,760 1720,780 1790,778 1835,770 1880,775 1910,740 1940,702 1985,678 2030,665 2070,637 2130,630 2230,633 2320,638 2380,637 2425,622 2450,645 2475,655 2490,690 2515,706 2570,683 2620,650 2655,637 2690,600 2715,580 2740,585 2770,602 2810,575 2850,600 2890,592 2940,593 3000,590 3030,603 3060,620 3073,640 3087,647';

const colors = { r: '#c23531', g: '#149414', k: '#222' };

function drawCandles() {
  return candles.map(([hi, lo, c, top, bottom], i) => {
    const x = 38 + i * 14.52;
    const t = top || +hi + (lo - hi) * 0.15;
    const b = bottom || lo - (lo - hi) * 0.1;
    return `<path stroke="${colors[c]}" stroke-width="2" d="M${x} ${hi}V${lo}"/>` +
      `<path stroke="${colors[c]}" stroke-width="4" d="M${x + 2} ${t}V${b}"/>`;
  }).join('');
}

function line(points, color) {
  return `<path stroke="${color}" stroke-width="2.7" d="M${points.split(' ').join('L')}"/>`;
}

function rescale(points) {
  return points.split(' ').map(p => {
    const [x, y] = p.split(',');
    return `${x},${(37 + (y - 168) * 1442 / 701).toFixed(1)}`;
  }).join(' ');
}

const grid = [398, 758, 1120].map(y =>
  `<path stroke="#ddd" stroke-width="1" stroke-dasharray="2 2" d="M36 ${y}H3097"/>`).join('');
document.getElementById('kline').innerHTML = grid + drawCandles() +
  Object.values(lines).map(([color, pts]) => line(pts, color)).join('');
document.getElementById('bands').innerHTML = drawCandles() +
  line(lines.ma20[1], '#222') + line(rescale(up), '#ecc02c') + line(rescale(low), '#c52bcb');

let ticks = '';
for (let i = 0; i <= 210; i++) {
  const major = i === 68 || i === 139 || i === 210;
  const x = 1 + i * 5;
  const alpha = i < 30 ? 0.1 : Math.min(1, (i - 29) / 12);
  ticks += `<path stroke="#777" stroke-opacity="${alpha}" stroke-width="${major ? 3 : 1.6}" d="M${major ? x + 1 : x} 2V${major ? 16 : (i < 30 ? 3 : 11)}"/>`;
}
document.getElementById('ticks').innerHTML = ticks;
```
